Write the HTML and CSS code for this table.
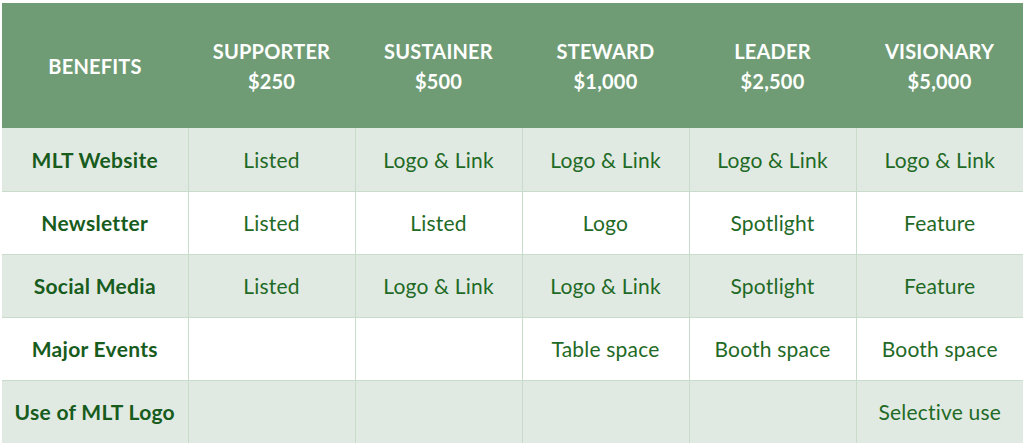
FILE: index.html
```html
<!DOCTYPE html>
<html>
<head>
<meta charset="utf-8">
<link rel="stylesheet" href="styles.css">
</head>
<body>
<table class="tiers">
  <colgroup>
    <col class="c-first">
    <col class="c-tier"><col class="c-tier"><col class="c-tier"><col class="c-tier"><col class="c-tier">
  </colgroup>
  <thead>
    <tr>
      <th>BENEFITS</th>
      <th>SUPPORTER<br>$250</th>
      <th>SUSTAINER<br>$500</th>
      <th>STEWARD<br>$1,000</th>
      <th>LEADER<br>$2,500</th>
      <th>VISIONARY<br>$5,000</th>
    </tr>
  </thead>
  <tbody>
    <tr class="alt">
      <th>MLT Website</th>
      <td>Listed</td><td>Logo &amp; Link</td><td>Logo &amp; Link</td><td>Logo &amp; Link</td><td>Logo &amp; Link</td>
    </tr>
    <tr>
      <th>Newsletter</th>
      <td>Listed</td><td>Listed</td><td>Logo</td><td>Spotlight</td><td>Feature</td>
    </tr>
    <tr class="alt">
      <th>Social Media</th>
      <td>Listed</td><td>Logo &amp; Link</td><td>Logo &amp; Link</td><td>Spotlight</td><td>Feature</td>
    </tr>
    <tr>
      <th>Major Events</th>
      <td></td><td></td><td>Table space</td><td>Booth space</td><td>Booth space</td>
    </tr>
    <tr class="alt">
      <th>Use of MLT Logo</th>
      <td></td><td></td><td></td><td></td><td>Selective use</td>
    </tr>
  </tbody>
</table>
</body>
</html>
```

FILE: styles.css
```css
html, body {
  margin: 0;
  padding: 0;
  background: #ffffff;
}
body {
  padding: 3px 2px 0 2px;
  font-family: "Lato", "Open Sans", sans-serif;
}
.tiers {
  border-collapse: collapse;
  table-layout: fixed;
  width: 1019px;
}
.c-first { width: 186px; }
.c-tier { width: 167px; }
.tiers thead th {
  background: #6f9c75;
  color: #ffffff;
  font-weight: 700;
  font-size: 20px;
  line-height: 30px;
  height: 125px;
  padding: 0;
  text-align: center;
  vertical-align: middle;
  letter-spacing: 0.2px;
}
.tiers tbody tr { height: 63px; background: #ffffff; }
.tiers tbody tr.alt { background: #e1eae2; }
.tiers tbody th,
.tiers tbody td {
  border: 1px solid #c9dccc;
  padding: 0;
  text-align: center;
  vertical-align: middle;
  color: #1f6a26;
  font-size: 21px;
}
.tiers tbody th {
  font-weight: 700;
  color: #175c1d;
  font-size: 21px;
  letter-spacing: 0.3px;
}
.tiers tbody td { font-weight: 400; letter-spacing: 0.2px; }
.tiers tbody tr:first-child th,
.tiers tbody tr:first-child td { border-top: none; }
.tiers tbody th:first-child { border-left: none; }
.tiers tbody td:last-child { border-right: none; }
.tiers tbody tr:last-child th,
.tiers tbody tr:last-child td { border-bottom: none; }
```
